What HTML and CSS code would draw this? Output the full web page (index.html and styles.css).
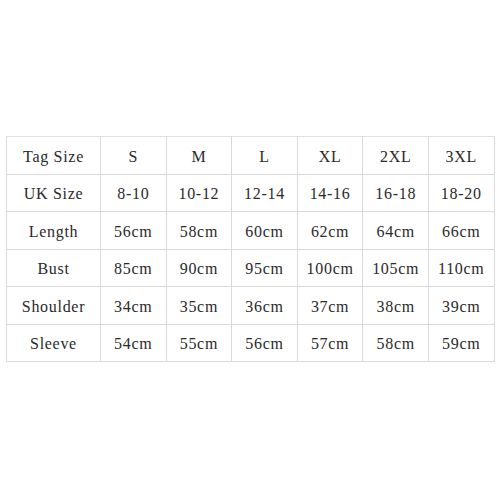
FILE: index.html
```html
<!DOCTYPE html>
<html>
<head>
<meta charset="utf-8">
<link rel="stylesheet" href="styles.css">
</head>
<body>
<div class="page">
<table class="sizes">
<colgroup>
<col class="c-label"><col class="c-val"><col class="c-val"><col class="c-val"><col class="c-val"><col class="c-val"><col class="c-val">
</colgroup>
<tr><td>Tag Size</td><td>S</td><td>M</td><td>L</td><td>XL</td><td>2XL</td><td>3XL</td></tr>
<tr><td>UK Size</td><td>8-10</td><td>10-12</td><td>12-14</td><td>14-16</td><td>16-18</td><td>18-20</td></tr>
<tr><td>Length</td><td>56cm</td><td>58cm</td><td>60cm</td><td>62cm</td><td>64cm</td><td>66cm</td></tr>
<tr><td>Bust</td><td>85cm</td><td>90cm</td><td>95cm</td><td>100cm</td><td>105cm</td><td>110cm</td></tr>
<tr><td>Shoulder</td><td>34cm</td><td>35cm</td><td>36cm</td><td>37cm</td><td>38cm</td><td>39cm</td></tr>
<tr><td>Sleeve</td><td>54cm</td><td>55cm</td><td>56cm</td><td>57cm</td><td>58cm</td><td>59cm</td></tr>
</table>
</div>
</body>
</html>
```
FILE: styles.css
```css
html, body {
  margin: 0;
  padding: 0;
  background: #ffffff;
}
.page {
  width: 500px;
  height: 500px;
  padding: 136px 0 0 6px;
  box-sizing: border-box;
}
.sizes {
  border-collapse: collapse;
  table-layout: fixed;
  width: 488px;
  font-family: "Liberation Serif", "Times New Roman", serif;
  font-size: 16px;
  letter-spacing: 0.7px;
  color: #2a2a2a;
}
.c-label { width: 94px; }
.c-val { width: 65.6px; }
.sizes td {
  border: 1px solid #d9d9d9;
  height: 37.5px;
  padding: 3px 0 0 0;
  text-align: center;
  vertical-align: middle;
  box-sizing: border-box;
  white-space: nowrap;
}
.sizes tr:first-child td { border-top-color: #e2e2e2; }
```
